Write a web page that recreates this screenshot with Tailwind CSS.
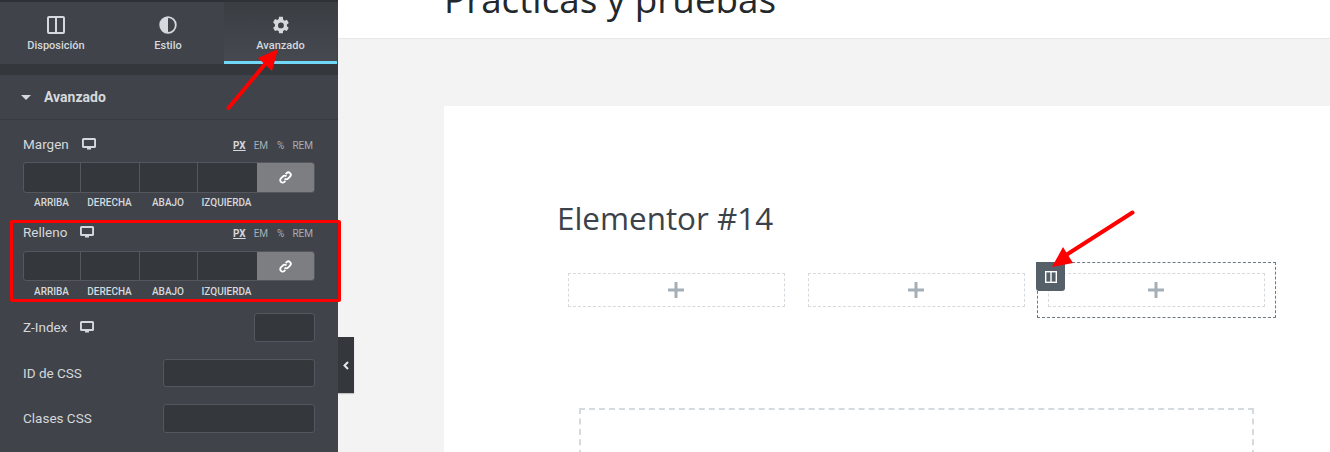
<!DOCTYPE html>
<html lang="es">
<head>
<meta charset="utf-8">
<title>Elementor</title>
<script src="https://cdn.jsdelivr.net/npm/@tailwindcss/browser@4"></script>
</head>
<body class="m-0 overflow-hidden">
<div class="relative flex h-[452px] w-[1330px] overflow-hidden bg-[#f3f3f3] font-['Roboto',sans-serif]">

  <!-- Sidebar -->
  <aside class="flex h-full w-[338px] shrink-0 flex-col bg-[#404349] text-[#d5d8dc]">
    <div class="h-[2px] bg-[#2e3135]"></div>
    <nav class="flex h-[62px] pr-px">
      <div class="flex w-[112px] flex-col items-center pt-[14px]">
        <svg class="h-[18px] w-[18px]" viewBox="0 0 18 18" fill="none" stroke="#d5d8dc" stroke-width="2"><rect x="1" y="1" width="16" height="16" rx="1"/><path d="M9 1v16"/></svg>
        <span class="mt-[5px] text-[11px] leading-[14px] font-medium">Disposición</span>
      </div>
      <div class="flex w-[112px] flex-col items-center pt-[14px]">
        <svg class="h-[18px] w-[18px]" viewBox="0 0 18 18"><circle cx="9" cy="9" r="7.800" fill="none" stroke="#d5d8dc" stroke-width="1.800"/><path d="M9 1a8 8 0 0 0 0 16z" fill="#d5d8dc"/></svg>
        <span class="mt-[5px] text-[11px] leading-[14px] font-medium">Estilo</span>
      </div>
      <div class="flex w-[113px] flex-col items-center border-b-[3px] border-[#71d7f7] bg-gradient-to-b from-[#3a3d42] to-[#464950] pt-[14px]">
        <svg class="h-[18px] w-[18px]" viewBox="2 1 21 21" fill="#d5d8dc"><path fill-rule="evenodd" d="M19.400 13a7.600 7.600 0 0 0 0-2l2.200-1.700-2.200-3.800-2.600 1a7.600 7.600 0 0 0-1.700-1L14.600 2h-4.400l-.4 2.600a7.600 7.600 0 0 0-1.700 1l-2.600-1-2.200 3.700L5.500 11a7.600 7.600 0 0 0 0 2l-2.200 1.700 2.200 3.800 2.600-1a7.600 7.600 0 0 0 1.700 1l.4 2.500h4.400l.4-2.600a7.600 7.600 0 0 0 1.700-1l2.600 1 2.200-3.800zM12.400 15.400a3.400 3.400 0 1 1 0-6.800 3.400 3.400 0 0 1 0 6.800z"/></svg>
        <span class="mt-[5px] text-[11px] leading-[14px] font-medium">Avanzado</span>
      </div>
    </nav>
    <div class="h-[11px] bg-[#34383c]"></div>

    <div class="flex h-[45px] items-center gap-[13px] border-b border-[#383b40] pl-[21px]">
      <span class="h-0 w-0 border-x-[5px] border-t-[5px] border-x-transparent border-t-[#d5d8dc]"></span>
      <span class="text-[14px] font-bold">Avanzado</span>
    </div>

    <div class="flex flex-col px-[23px]">
      <!-- Margen -->
      <div class="mt-[14px] flex h-[20px] items-center">
        <span class="text-[13.500px] text-[#d5d8dc]">Margen</span>
        <svg class="ml-[13px] h-[13px] w-[14px]" viewBox="0 0 14 13" fill="#d5d8dc"><path d="M1.500 0h11A1.500 1.500 0 0 1 14 1.500v7a1.500 1.500 0 0 1-1.500 1.500H9v1.500H5V10H1.500A1.500 1.500 0 0 1 0 8.500v-7A1.500 1.500 0 0 1 1.500 0zm.4 2v6h10.200V2z"/></svg>
        <div class="ml-auto flex gap-[8px] pr-[2px] pt-[3px] text-[10px] text-[#a4afb7]">
          <span class="font-bold text-[#d5d8dc] underline">PX</span><span class="mr-px">EM</span><span>%</span><span>REM</span>
        </div>
      </div>
      <div class="mt-[8px] flex h-[31px] w-[292px] overflow-hidden rounded-[3px] border border-[#54575d] bg-[#34383c]">
        <div class="w-[57px] border-r border-[#54575d]"></div>
        <div class="w-[59px] border-r border-[#54575d]"></div>
        <div class="w-[58px] border-r border-[#54575d]"></div>
        <div class="w-[59px]"></div>
        <div class="flex flex-1 items-center justify-center bg-[#7d7e82]">
          <svg class="h-[13px] w-[13px]" viewBox="0 0 14 14" fill="none" stroke="#fff" stroke-width="2"><path d="M6 8.200a2.600 2.600 0 0 0 3.700 0l2.200-2.200a2.600 2.600 0 0 0-3.700-3.700l-1 1"/><path d="M8 5.800a2.600 2.600 0 0 0-3.700 0L2.100 8a2.600 2.600 0 0 0 3.700 3.700l1-1"/></svg>
        </div>
      </div>
      <div class="mt-[3px] flex h-[14px] w-[292px] text-center text-[10px] leading-[14px] font-medium text-[#d5d8dc]">
        <span class="w-[57px]">ARRIBA</span><span class="w-[59px]">DERECHA</span><span class="w-[58px]">ABAJO</span><span class="w-[59px]">IZQUIERDA</span>
      </div>

      <!-- Relleno -->
      <div class="mt-[12px] flex h-[20px] items-center">
        <span class="text-[13.500px] text-[#d5d8dc]">Relleno</span>
        <svg class="ml-[13px] h-[13px] w-[14px]" viewBox="0 0 14 13" fill="#d5d8dc"><path d="M1.500 0h11A1.500 1.500 0 0 1 14 1.500v7a1.500 1.500 0 0 1-1.500 1.500H9v1.500H5V10H1.500A1.500 1.500 0 0 1 0 8.500v-7A1.500 1.500 0 0 1 1.500 0zm.4 2v6h10.200V2z"/></svg>
        <div class="ml-auto flex gap-[8px] pr-[2px] pt-[3px] text-[10px] text-[#a4afb7]">
          <span class="font-bold text-[#d5d8dc] underline">PX</span><span class="mr-px">EM</span><span>%</span><span>REM</span>
        </div>
      </div>
      <div class="mt-[9px] flex h-[30px] w-[292px] overflow-hidden rounded-[3px] border border-[#54575d] bg-[#34383c]">
        <div class="w-[57px] border-r border-[#54575d]"></div>
        <div class="w-[59px] border-r border-[#54575d]"></div>
        <div class="w-[58px] border-r border-[#54575d]"></div>
        <div class="w-[59px]"></div>
        <div class="flex flex-1 items-center justify-center bg-[#7d7e82]">
          <svg class="h-[13px] w-[13px]" viewBox="0 0 14 14" fill="none" stroke="#fff" stroke-width="2"><path d="M6 8.200a2.600 2.600 0 0 0 3.700 0l2.200-2.200a2.600 2.600 0 0 0-3.700-3.700l-1 1"/><path d="M8 5.800a2.600 2.600 0 0 0-3.700 0L2.100 8a2.600 2.600 0 0 0 3.700 3.700l1-1"/></svg>
        </div>
      </div>
      <div class="mt-[4px] flex h-[14px] w-[292px] text-center text-[10px] leading-[14px] font-medium text-[#d5d8dc]">
        <span class="w-[57px]">ARRIBA</span><span class="w-[59px]">DERECHA</span><span class="w-[58px]">ABAJO</span><span class="w-[59px]">IZQUIERDA</span>
      </div>

      <!-- Z-Index -->
      <div class="mt-[14px] flex h-[29px] items-center">
        <span class="text-[13.500px]">Z-Index</span>
        <svg class="ml-[13px] h-[13px] w-[14px]" viewBox="0 0 14 13" fill="#d5d8dc"><path d="M1.500 0h11A1.500 1.500 0 0 1 14 1.500v7a1.500 1.500 0 0 1-1.500 1.500H9v1.500H5V10H1.500A1.500 1.500 0 0 1 0 8.500v-7A1.500 1.500 0 0 1 1.500 0zm.4 2v6h10.200V2z"/></svg>
        <div class="ml-auto h-[29px] w-[61px] rounded-[3px] border border-[#54575d] bg-[#34383c]"></div>
      </div>
      <div class="mt-[17px] flex h-[28px] items-center justify-between">
        <span class="text-[13.500px]">ID de CSS</span>
        <div class="h-[28px] w-[152px] rounded-[3px] border border-[#54575d] bg-[#34383c]"></div>
      </div>
      <div class="mt-[17px] flex h-[29px] items-center justify-between">
        <span class="text-[13.500px]">Clases CSS</span>
        <div class="h-[29px] w-[152px] rounded-[3px] border border-[#54575d] bg-[#34383c]"></div>
      </div>
    </div>
  </aside>

  <!-- Main -->
  <main class="relative flex min-w-0 flex-1 flex-col overflow-hidden">
    <!-- collapse handle -->
    <div class="absolute left-0 top-[337px] z-10 flex h-[56px] w-[16px] items-center justify-center bg-[#34383c] shadow-[0_1px_1px_rgba(0,0,0,0.2)]">
      <svg class="h-[9px] w-[6px]" viewBox="0 0 6 9" fill="none" stroke="#e6e9ec" stroke-width="2"><path d="M5 1 1.500 4.500 5 8"/></svg>
    </div>

    <header class="h-[39px] shrink-0 overflow-hidden border-b border-[#e8e8e8] bg-white pl-[106px]">
      <h1 class="mt-[-22px] font-['Open_Sans',sans-serif] text-[36.800px] leading-[42px] font-normal whitespace-nowrap text-[#23282d]">Prácticas y pruebas</h1>
    </header>

    <section class="ml-[106px] mt-[67px] min-h-0 flex-1 overflow-hidden bg-white pl-[113px]">
      <h2 class="mt-[92px] font-['Open_Sans',sans-serif] text-[31.400px] leading-[40px] font-normal text-[#3b4249]">Elementor #14</h2>

      <div class="mt-[24px] flex w-[720px]">
        <div class="w-[240px] pl-[11px] pr-[12px] pt-[11px] pb-[11px]">
          <div class="flex h-[34px] items-center justify-center border border-dashed border-[#d5dadf] pr-px">
            <svg class="h-[16px] w-[16px]" viewBox="0 0 16 16" fill="#a4afb7"><path d="M6.500 0h3v6.500H16v3H9.500V16h-3V9.500H0v-3h6.500z"/></svg>
          </div>
        </div>
        <div class="w-[240px] pl-[11px] pr-[12px] pt-[11px] pb-[11px]">
          <div class="flex h-[34px] items-center justify-center border border-dashed border-[#d5dadf] pr-px">
            <svg class="h-[16px] w-[16px]" viewBox="0 0 16 16" fill="#a4afb7"><path d="M6.500 0h3v6.500H16v3H9.500V16h-3V9.500H0v-3h6.500z"/></svg>
          </div>
        </div>
        <div class="relative h-[56px] w-[239px] border border-dashed border-[#6d7882] pl-[10px] pr-[10px] pt-[10px]">
          <div class="flex h-[34px] items-center justify-center border border-dashed border-[#d5dadf] pr-px">
            <svg class="h-[16px] w-[16px]" viewBox="0 0 16 16" fill="#a4afb7"><path d="M6.500 0h3v6.500H16v3H9.500V16h-3V9.500H0v-3h6.500z"/></svg>
          </div>
          <div class="absolute left-[-2px] top-[-1px] flex h-[29px] w-[29px] items-center justify-center rounded-b-[3px] bg-[#556068]">
            <svg class="h-[12px] w-[12px]" viewBox="0 0 12 12" fill="none" stroke="#fff" stroke-width="1.400"><rect x="0.700" y="0.700" width="10.600" height="10.600"/><path d="M6 1v10"/></svg>
          </div>
        </div>
      </div>

      <div class="ml-[22px] mt-[90px] h-[100px] w-[675px] border-2 border-dashed border-[#d5dadf]"></div>
    </section>
  </main>

  <!-- Annotation overlay: red frame and arrows -->
  <div class="pointer-events-none absolute left-[10px] top-[220px] h-[82px] w-[331px] rounded-[2px] border-[3px] border-[#ff0000]"></div>
  <svg class="pointer-events-none absolute left-0 top-0 h-[452px] w-[1330px]" viewBox="0 0 1330 452">
    <path d="M228.500 108 266 63" stroke="#ff0000" stroke-width="4" stroke-linecap="round" fill="none"/>
    <path d="M278 49 258 58 272 71z" fill="#ff0000"/>
    <path d="M1132.500 212.500 1063 257" stroke="#ff0000" stroke-width="4" stroke-linecap="round" fill="none"/>
    <path d="M1052 267 1063 247 1073 263z" fill="#ff0000"/>
  </svg>
</div>
</body>
</html>
